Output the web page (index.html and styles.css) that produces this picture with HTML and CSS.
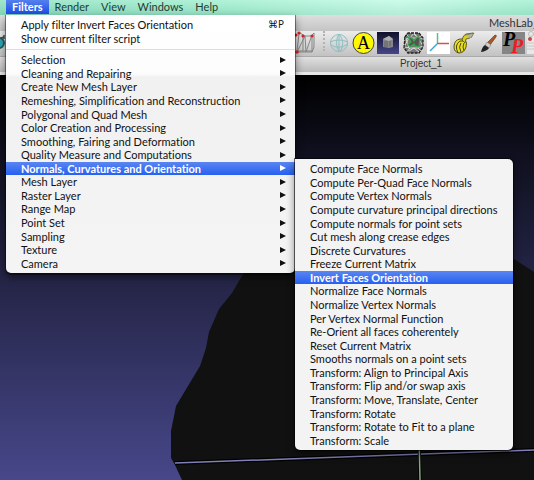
FILE: index.html
```html
<!DOCTYPE html>
<html lang="en">
<head>
<meta charset="utf-8">
<title>MeshLab</title>
<link rel="stylesheet" href="styles.css">
</head>
<body>
<nav class="menubar" aria-label="Application menu">
  <button class="menubar-item is-open">Filters</button>
  <button class="menubar-item">Render</button>
  <button class="menubar-item">View</button>
  <button class="menubar-item">Windows</button>
  <button class="menubar-item">Help</button>
</nav>

<main class="window">
  <header class="titlebar">MeshLab_6</header>
  <div class="toolbar">
    <button class="tool" aria-label="Reload">
      <svg viewBox="0 0 23 23"><circle cx="-1" cy="12" r="5" fill="#2aa5b0" stroke="#30545c" stroke-width="2"/><path d="M1 7l3-1M4 4v4" stroke="#30545c" stroke-width="1.500"/></svg>
    </button>
    <div class="tool-group">
      <button class="tool" aria-label="Edges">
        <svg viewBox="0 0 23 23" fill="none" stroke="#858585"><path d="M4 20L6 3M7 2l5 3h6l3-3v14l-2 5H4L12 5l1 16L19 4v17M4 20h15M10 6v14"/><g fill="#d22" stroke="none"><circle cx="3" cy="4" r="1.600"/><circle cx="6" cy="2" r="1.600"/><circle cx="10" cy="5" r="1.600"/><circle cx="19" cy="5" r="1.600"/><circle cx="4" cy="21" r="1.800"/></g></svg>
      </button>
      <span class="tool-separator"></span>
      <button class="tool" aria-label="Wireframe">
        <svg viewBox="0 0 23 23" fill="none" stroke="#8dbfc2"><circle cx="12" cy="12" r="8.500"/><path d="M12 3q-5 8 0 18M12 3q7 8 1 18M3 11q9-4 18 0M4 14q8 5 17-1M12 3v18"/></svg>
      </button>
      <button class="tool" aria-label="Labels">
        <svg viewBox="0 0 23 23"><circle cx="11.500" cy="12" r="10.500" fill="#fff800" stroke="#444"/><text class="label-glyph" x="11.500" y="18" text-anchor="middle">A</text></svg>
      </button>
      <button class="tool" aria-label="Show box">
        <svg viewBox="0 0 23 23"><defs><linearGradient id="box" x2="0" y2="1"><stop stop-color="#10102b"/><stop offset="1" stop-color="#46468a"/></linearGradient></defs><path d="M0 1h22v22H0z" fill="url(#box)"/><path d="M6 8l6-3 4 3v8l-4 1-6-1z" fill="#85858a"/><path d="M6 8l6-3 4 3-4 2z" fill="#b0b0b0"/><path d="M8 10v6M10 10v6M13 10v5" stroke="#606468"/></svg>
      </button>
      <button class="tool" aria-label="Boundary">
        <svg viewBox="0 0 23 23"><path d="M5 2h12l4 5v10l-4 5H6l-4-5V6z" fill="#777"/><path d="M4 3l4 4 4-5 4 5 4-3M2 9l5-2-5 9 6 1-3 4M21 8l-5-1 5 8-5 2 3 3M7 20l5-3 5 4M3 5l4 12M11 2l5 5M7 7h9M8 17h8" fill="none" stroke="#eee" stroke-width=".8"/><path d="M3 6l3-4h11l4 5v9l-4 6H6l-4-5z" fill="none" stroke="#222" stroke-width="1.300" stroke-dasharray="3 1"/><path d="M6 6l4 1 2 3 3-4 3 1-1 9-4-1-1-2-4 3-2-3 3-2z" fill="#555" stroke="#3ca84c" stroke-width="1.300"/></svg>
      </button>
      <button class="tool" aria-label="Axes">
        <svg viewBox="0 0 23 23" fill="none"><path d="M0 1h23v22H0z" fill="#fff"/><path d="M10.500 2v11" stroke="#65ba8a" stroke-width="1.500"/><path d="M10 12.500h12" stroke="#d94c5b" stroke-width="1.500"/><path d="M10 13l-7 7" stroke="#38a6d8" stroke-width="1.500"/></svg>
      </button>
      <button class="tool" aria-label="Measure">
        <svg viewBox="0 0 23 23"><path d="M2 16q0-7 6-8h4q4 3 2 8-2 6-7 6-5-1-5-6z" fill="#e9df1d" stroke="#54521a"/><path d="M6 22q-4-8 2-12h3M9 21q-3-5 0-9M12 20q-2-4 0-8" fill="none" stroke="#4a4815"/><path d="M10 9q1-5 4-6l7-1-3 5-4 1-1 4z" fill="#d8cd22" stroke="#54521a" stroke-width=".8"/><path d="M13 4l9-2-3 5" fill="#b3b69e" stroke="#66664e" stroke-width=".7"/></svg>
      </button>
      <button class="tool" aria-label="Paint">
        <svg viewBox="0 0 23 23"><path d="M18 4q2 0 1 2l-6 8-3-2z" fill="#a8562b" stroke="#6d3d24" stroke-width=".7"/><path d="M10 11l4 3-2 3-4-3z" fill="#ccc" stroke="#777" stroke-width=".5"/><path d="M8 14l4 3q-2 3-8 4 1-5 4-7z" fill="#222"/></svg>
      </button>
      <button class="tool" aria-label="Pick points">
        <svg viewBox="0 0 23 23"><path d="M0 1h23v22H0z" fill="#868686"/><text class="pick-glyph" x="1" y="15">P</text><text class="pick-glyph pick-glyph-red" x="9" y="22">P</text></svg>
      </button>
      <button class="tool" aria-label="Align">
        <svg viewBox="0 0 23 23"><path d="M0 1h23v22H0z" fill="#e8e8e8"/><circle cx="4" cy="3" r="2.500" fill="none" stroke="#bbb"/><circle cx="3" cy="8" r="2" fill="#c44"/><path d="M0 12h23M0 15h23M0 18h23" stroke="#c8c8c8"/></svg>
      </button>
    </div>
  </div>
  <div class="document-title">Project_1</div>
  <section class="viewport" aria-label="3D view">
    <svg class="scene" viewBox="0 0 534 405" preserveAspectRatio="xMinYMin slice">
      <path d="M182 405L175 390 171 383V356L176 331 200 291 206 273 209 257 219 234 232 218 242 201 300 140H450L514 184 534 197V405z" fill="#111"/>
      <path d="M175 388L534 375" stroke="#000" stroke-width="4"/>
      <path d="M175 388L534 375" stroke="#8080b8" stroke-width="1.500"/>
      <path d="M419 360L420 405" stroke="#000" stroke-width="3"/>
      <path d="M419 360L420 405" stroke="#80a880" stroke-width="1.500"/>
    </svg>
  </section>
</main>

<div class="menu menu-filters" role="menu" aria-label="Filters">
  <div class="menu-group menu-group-recent">
    <button class="menu-item" role="menuitem">Apply filter Invert Faces Orientation<kbd>⌘P</kbd></button>
    <button class="menu-item" role="menuitem">Show current filter script</button>
  </div>
  <hr class="menu-separator">
  <div class="menu-group menu-group-categories">
    <button class="menu-item has-submenu" role="menuitem">Selection</button>
    <button class="menu-item has-submenu" role="menuitem">Cleaning and Repairing</button>
    <button class="menu-item has-submenu" role="menuitem">Create New Mesh Layer</button>
    <button class="menu-item has-submenu" role="menuitem">Remeshing, Simplification and Reconstruction</button>
    <button class="menu-item has-submenu" role="menuitem">Polygonal and Quad Mesh</button>
    <button class="menu-item has-submenu" role="menuitem">Color Creation and Processing</button>
    <button class="menu-item has-submenu" role="menuitem">Smoothing, Fairing and Deformation</button>
    <button class="menu-item has-submenu" role="menuitem">Quality Measure and Computations</button>
    <button class="menu-item has-submenu is-selected" role="menuitem">Normals, Curvatures and Orientation</button>
    <button class="menu-item has-submenu" role="menuitem">Mesh Layer</button>
    <button class="menu-item has-submenu" role="menuitem">Raster Layer</button>
    <button class="menu-item has-submenu" role="menuitem">Range Map</button>
    <button class="menu-item has-submenu" role="menuitem">Point Set</button>
    <button class="menu-item has-submenu" role="menuitem">Sampling</button>
    <button class="menu-item has-submenu" role="menuitem">Texture</button>
    <button class="menu-item has-submenu" role="menuitem">Camera</button>
  </div>
</div>

<div class="menu menu-normals" role="menu" aria-label="Normals, Curvatures and Orientation">
  <div class="menu-group menu-group-normals">
    <button class="menu-item" role="menuitem">Compute Face Normals</button>
    <button class="menu-item" role="menuitem">Compute Per-Quad Face Normals</button>
    <button class="menu-item" role="menuitem">Compute Vertex Normals</button>
    <button class="menu-item" role="menuitem">Compute curvature principal directions</button>
    <button class="menu-item" role="menuitem">Compute normals for point sets</button>
    <button class="menu-item" role="menuitem">Cut mesh along crease edges</button>
    <button class="menu-item" role="menuitem">Discrete Curvatures</button>
    <button class="menu-item" role="menuitem">Freeze Current Matrix</button>
    <button class="menu-item is-selected" role="menuitem">Invert Faces Orientation</button>
    <button class="menu-item" role="menuitem">Normalize Face Normals</button>
    <button class="menu-item" role="menuitem">Normalize Vertex Normals</button>
    <button class="menu-item" role="menuitem">Per Vertex Normal Function</button>
    <button class="menu-item" role="menuitem">Re-Orient all faces coherentely</button>
    <button class="menu-item" role="menuitem">Reset Current Matrix</button>
    <button class="menu-item" role="menuitem">Smooths normals on a point sets</button>
    <button class="menu-item" role="menuitem">Transform: Align to Principal Axis</button>
    <button class="menu-item" role="menuitem">Transform: Flip and/or swap axis</button>
    <button class="menu-item" role="menuitem">Transform: Move, Translate, Center</button>
    <button class="menu-item" role="menuitem">Transform: Rotate</button>
    <button class="menu-item" role="menuitem">Transform: Rotate to Fit to a plane</button>
    <button class="menu-item" role="menuitem">Transform: Scale</button>
  </div>
</div>
</body>
</html>
```
FILE: styles.css
```css
* {
  box-sizing: border-box;
}

body {
  position: relative;
  display: flex;
  flex-direction: column;
  min-height: 100vh;
  margin: 0;
  overflow: hidden;
  background: #000;
  color: #111;
  font-family: Lato, "Noto Sans", sans-serif;
  font-size: 11px;
  font-variant-ligatures: none;
}

button {
  margin: 0;
  padding: 0;
  border: 0;
  background: none;
  color: inherit;
  font: inherit;
  font-variant-ligatures: none;
  text-align: left;
  white-space: nowrap;
}

.menubar {
  display: flex;
  height: 15px;
  padding-left: 6px;
  background:
    linear-gradient(rgba(255, 255, 255, 0.2), rgba(0, 0, 0, 0.06)),
    linear-gradient(90deg, #8ae0bf, #a0f0d0 45%, #c0fbe5 75%, #a0f0d0);
}

.menubar-item {
  height: 14px;
  padding: 0 6px;
  line-height: 14px;
  color: #263c33;
}

.menubar-item.is-open {
  background: linear-gradient(#5580ed, #1c4ee8);
  color: #fff;
  font-weight: 700;
}

.window {
  display: flex;
  flex: 1;
  flex-direction: column;
}

.titlebar {
  height: 16px;
  padding-left: 489px;
  overflow: hidden;
  background: linear-gradient(#dedede, #c4c4c4);
  color: #333;
  line-height: 16px;
  white-space: nowrap;
}

.toolbar {
  display: flex;
  height: 25px;
  overflow: hidden;
  background: linear-gradient(#ececec, #c2c2c2);
}

.tool {
  flex: none;
  width: 23px;
  height: 23px;
}

.tool svg {
  display: block;
  width: 100%;
  height: 100%;
  overflow: visible;
}

.tool-group {
  display: flex;
  gap: 2px;
  margin-left: 270px;
}

.tool-separator {
  flex: none;
  width: 7px;
  height: 20px;
  border-right: 2px dotted #b4b4b4;
}

.label-glyph {
  font: 18px "Liberation Serif", serif;
}

.pick-glyph {
  font: italic bold 20px "Liberation Serif", serif;
}

.pick-glyph-red {
  fill: #ed1c24;
}

.document-title {
  height: 19px;
  padding-left: 308px;
  border-top: 1px solid #aaa;
  border-bottom: 3px solid #e6e6e6;
  background: linear-gradient(#e0e0e0, #b9b9b9);
  color: #333;
  font-family: "Liberation Sans", sans-serif;
  font-size: 10px;
  line-height: 14px;
  text-align: center;
}

.viewport {
  position: relative;
  flex: 1;
  min-height: 200px;
  background: linear-gradient(#000, #101020 20%, #242446 50%, #47478a);
}

.scene {
  position: absolute;
  inset: 0;
  width: 100%;
  height: 100%;
}

.menu {
  position: absolute;
  background: #f3f3f3;
  box-shadow: 0 0 0 1px rgba(0, 0, 0, 0.6), 0 4px 8px rgba(0, 0, 0, 0.5);
}

.menu-filters {
  top: 15px;
  left: 6px;
  width: 289px;
  padding: 3px 0;
  border-radius: 0 0 5px 5px;
  background: linear-gradient(#fff, #fcfcfc 59px, #f1f1f1 62px, #f4f4f4);
  box-shadow: 0 4px 8px rgba(0, 0, 0, 0.5), 0 1px 0 1px rgba(0, 0, 0, 0.4);
}

.menu-normals {
  top: 159px;
  left: 295px;
  width: 218px;
  padding: 3px 0;
  border-radius: 0 5px 5px 5px;
}

.menu-group {
  display: grid;
  grid-auto-rows: 1fr;
}

.menu-group-recent {
  height: 27px;
}

.menu-group-categories {
  height: 217px;
}

.menu-group-normals {
  height: 285px;
}

.menu-separator {
  height: 1px;
  margin: 4px 0 3px;
  border: 0;
  background: #ddd;
}

.menu-item {
  display: flex;
  align-items: center;
  justify-content: space-between;
  min-height: 0;
  padding: 0 9px 0 15px;
  line-height: 13px;
}

.menu-item kbd {
  margin-right: 2px;
  font-family: "Noto Sans", "DejaVu Sans", sans-serif;
  font-size: 10px;
}

.has-submenu::after {
  content: "";
  border: solid transparent;
  border-width: 3px 0 3px 6px;
  border-left-color: currentColor;
}

.menu-item.is-selected {
  background: linear-gradient(#5a86f2, #2760f0);
  color: #fff;
  font-weight: 700;
}
```
